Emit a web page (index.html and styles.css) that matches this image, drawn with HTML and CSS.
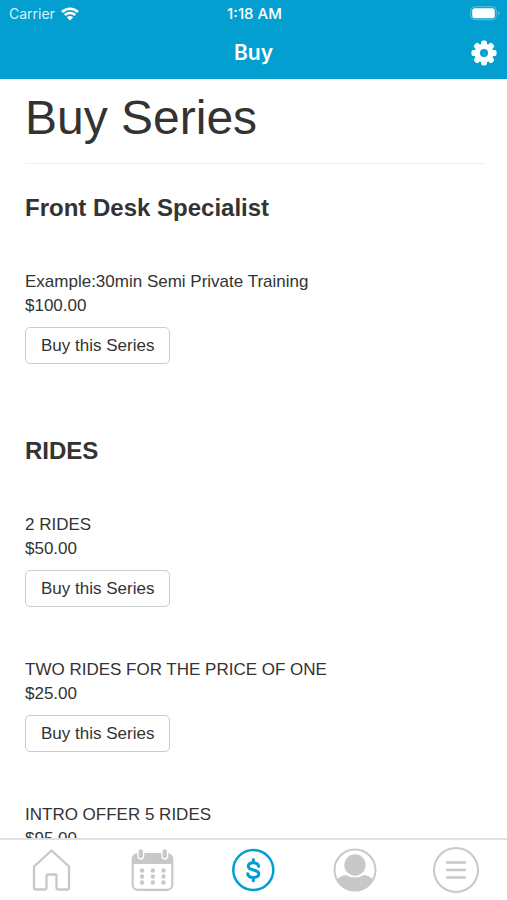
FILE: index.html
```html
<!DOCTYPE html>
<html lang="en">
<head>
<meta charset="utf-8">
<meta name="viewport" content="width=device-width, initial-scale=1">
<title>Buy</title>
<link rel="stylesheet" href="styles.css">
</head>
<body>
<header class="top">
  <div class="status">
    <span class="carrier">Carrier
      <svg class="wifi" viewBox="0 0 18 14" aria-hidden="true"><path d="M1 5a11.5 11.5 0 0 1 16 0M3.800 8a7.500 7.500 0 0 1 10.400 0" fill="none" stroke="#fff" stroke-width="2.500"/><path d="M9 13.500l-3.200-3.300a4.600 4.600 0 0 1 6.400 0z" fill="#fff"/></svg>
    </span>
    <span class="time">1:18 AM</span>
    <svg class="battery" viewBox="0 0 30 15" aria-hidden="true"><rect x=".7" y=".7" width="25.600" height="13" rx="4" fill="none" stroke="#5cc0e2"/><rect x="2.200" y="2.200" width="22.600" height="10" rx="2.500" fill="#fff"/><path d="M28 5v4.500q1.500-.8 1.500-2.250T28 5z" fill="#5cc0e2"/></svg>
  </div>
  <div class="nav">
    <span class="nav-title">Buy</span>
    <button class="settings" type="button" aria-label="Settings">
      <svg viewBox="-13 -13 26 26" aria-hidden="true">
        <g fill="#fff"><rect id="tooth" x="-2.900" y="-12.600" width="5.800" height="25.200" rx="2"/><use href="#tooth" transform="rotate(45)"/><use href="#tooth" transform="rotate(90)"/><use href="#tooth" transform="rotate(135)"/><circle r="9.600"/></g>
        <circle r="4" fill="#039fd0"/>
      </svg>
    </button>
  </div>
</header>

<main class="content">
  <h1>Buy Series</h1>
  <section>
    <h2>Front Desk Specialist</h2>
    <article class="item">
      <p>Example:30min Semi Private Training</p>
      <p>$100.00</p>
      <button class="buy" type="button">Buy this Series</button>
    </article>
  </section>
  <section>
    <h2>RIDES</h2>
    <article class="item">
      <p>2 RIDES</p>
      <p>$50.00</p>
      <button class="buy" type="button">Buy this Series</button>
    </article>
    <article class="item">
      <p>TWO RIDES FOR THE PRICE OF ONE</p>
      <p>$25.00</p>
      <button class="buy" type="button">Buy this Series</button>
    </article>
    <article class="item">
      <p>INTRO OFFER 5 RIDES</p>
      <p>$95.00</p>
      <button class="buy" type="button">Buy this Series</button>
    </article>
  </section>
</main>

<nav class="tabs" aria-label="Main">
  <a href="#home" aria-label="Home"><svg viewBox="0 0 48 48"><path d="M24.500 4.500L7 20.500v21q0 2 2 2h8.500q2 0 2-2v-12q0-1 1-1h8q1 0 1 1v12q0 2 2 2H40q2 0 2-2v-21z" fill="none" stroke="currentColor" stroke-width="2.300" stroke-linejoin="round"/></svg></a>
  <a href="#calendar" aria-label="Calendar"><svg viewBox="0 0 48 48"><rect x="4.700" y="8.200" width="39.600" height="35.600" rx="5" fill="none" stroke="currentColor" stroke-width="2.200"/><path d="M4 18v-5q0-5 5-5h31q5 0 5 5v5z" fill="currentColor"/><g fill="currentColor" stroke="#fff" stroke-width="1.300"><rect x="10" y="2.500" width="5.600" height="10.500" rx="2.800"/><rect x="34" y="2.500" width="5.600" height="10.500" rx="2.800"/></g><path d="M14 24.500h.01M24.800 24.500h.01M35.500 24.500h.01M14 30.500h.01M24.800 30.500h.01M35.500 30.500h.01M14 36.500h.01M24.800 36.500h.01M35.500 36.500h.01" stroke="currentColor" stroke-width="4.400" stroke-linecap="round"/></svg></a>
  <a class="active" href="#buy" aria-label="Buy" aria-current="page"><svg viewBox="0 0 48 48"><circle cx="24.300" cy="24" r="20" fill="none" stroke="currentColor" stroke-width="2.500"/><path d="M29.700 20.300c-.5-2.200-2.500-3.500-5.400-3.500-3 0-5 1.400-5 3.500 0 5 10.500 2.500 10.500 7.500 0 2.300-2.300 3.700-5.500 3.700-3.100 0-5.300-1.400-5.600-3.800M24.300 13.500v3.300M24.300 31.500v3.300" fill="none" stroke="currentColor" stroke-width="3" stroke-linecap="round"/></svg></a>
  <a href="#profile" aria-label="Profile"><svg viewBox="0 0 48 48"><circle cx="24" cy="24" r="20.500" fill="none" stroke="currentColor" stroke-width="2"/><circle cx="24" cy="19" r="10.700" fill="currentColor"/><path d="M6 33.500q3.500-4 9-4.500 9 5 18 0 5.500.5 9 4.500-5.500 11-18 11T6 33.500z" fill="currentColor"/></svg></a>
  <a href="#menu" aria-label="Menu"><svg viewBox="0 0 48 48"><circle cx="24" cy="24" r="22" fill="none" stroke="currentColor" stroke-width="2"/><path d="M15 16.500h18M15 24h18M15 31.500h18" fill="none" stroke="currentColor" stroke-width="2.400" stroke-linecap="round"/></svg></a>
</nav>
</body>
</html>
```
FILE: styles.css
```css
* { box-sizing: border-box; }

body {
  margin: 0;
  height: 100vh;
  display: flex;
  flex-direction: column;
  background: #fff;
  color: #333;
  font: 17px/24px "Liberation Sans", Arial, sans-serif;
}

h1, h2, p { margin: 0; }

.top {
  flex: none;
  background: #039fd0;
  color: #fff;
  font-family: Inter, sans-serif;
}

.status {
  display: grid;
  grid-template-columns: 1fr auto 1fr;
  align-items: center;
  height: 27px;
  padding: 0 7px 0 9px;
  font-size: 14px;
}

.carrier { display: flex; align-items: center; gap: 6px; color: #d8f0f8; }
.wifi { width: 18px; height: 14px; }
.time { font-size: 15px; font-weight: 500; }
.battery { width: 30px; height: 15px; justify-self: end; }

.nav {
  display: grid;
  grid-template-columns: 1fr auto 1fr;
  align-items: center;
  height: 52px;
  padding: 0 10px;
}

.nav-title { grid-column: 2; font-size: 21px; font-weight: 600; }

.settings {
  justify-self: end;
  display: flex;
  padding: 0;
  border: 0;
  background: none;
}
.settings svg { width: 26px; height: 26px; }

.content {
  flex: 1;
  min-height: 0;
  overflow: hidden;
  padding: 11px 23px 0 25px;
}

h1 {
  margin-bottom: 30px;
  padding-bottom: 17px;
  border-bottom: 1px solid #eee;
  font-size: 48px;
  line-height: 56px;
  font-weight: 400;
}

h2 {
  margin-bottom: 48px;
  font-size: 24px;
  line-height: 28px;
}

section { padding-bottom: 22px; }

.item { padding-bottom: 51px; }

.buy {
  display: block;
  margin-top: 9px;
  height: 37px;
  padding: 0 15px;
  border: 1px solid #ccc;
  border-radius: 5px;
  background: #fff;
  color: #333;
  font: inherit;
}

.tabs {
  flex: none;
  display: grid;
  grid-template-columns: repeat(5, 1fr);
  height: 62px;
  border-top: 2px solid #e0e0e0;
  background: #fff;
}

.tabs a {
  display: flex;
  align-items: center;
  justify-content: center;
  color: #c8c8c8;
}
.tabs .active { color: #039fd0; }
.tabs svg { width: 48px; height: 48px; }
```
